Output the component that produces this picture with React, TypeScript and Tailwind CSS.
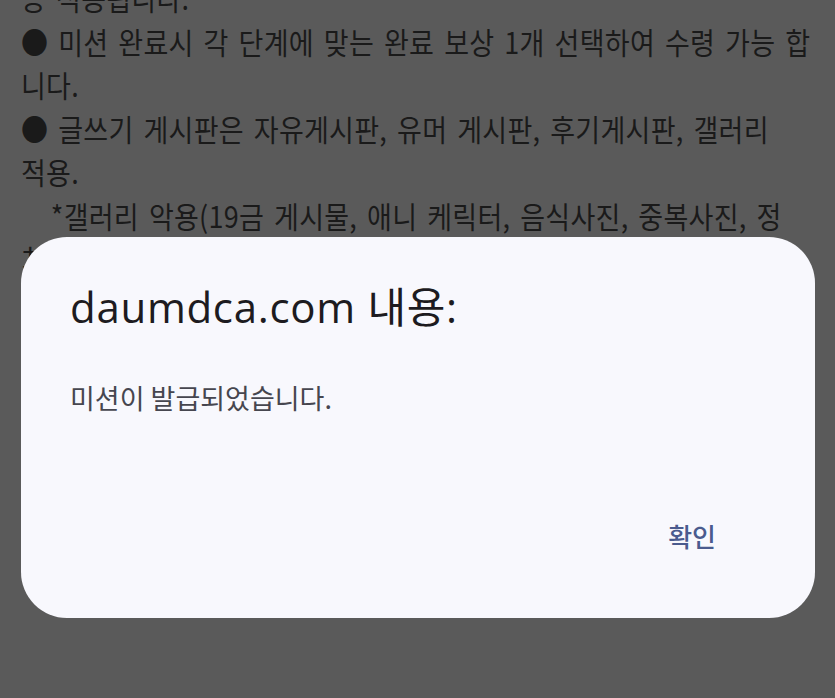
export default function App() {
  const lines = [
    "능 적용됩니다.",
    "● 미션 완료시 각 단계에 맞는 완료 보상 1개 선택하여 수령 가능 합",
    "니다.",
    "● 글쓰기 게시판은 자유게시판, 유머 게시판, 후기게시판, 갤러리",
    "적용.",
    "   *갤러리 악용(19금 게시물, 애니 케릭터, 음식사진, 중복사진, 정",
    "치 관련 사진 등) 시 보상 지급이 제한됩니다.",
  ];

  return (
    <div className="relative h-[698px] w-[835px] overflow-hidden bg-[#5a5a5a]">
      <div className="-mt-[24px] ml-[21px] w-[960px] origin-top-left scale-x-[0.9] whitespace-pre font-['Noto_Sans_CJK_KR',sans-serif] text-[30px] leading-[43.5px] tracking-[0.3px] text-[#1a1a1a] [word-spacing:4px]">
        {lines.map((l, i) => (
          <div key={i}>{l}</div>
        ))}
      </div>

      <div className="absolute left-[21px] top-[237px] flex h-[381px] w-[794px] flex-col rounded-[46px] bg-[#f8f8fd] pl-[49px] pr-[99px]">
        <div className="mt-[44px] font-['Open_Sans','Noto_Sans_CJK_KR',sans-serif] text-[42px] leading-[52px] tracking-[0.7px] text-[#1d1b20]">
          daumdca.com 내용:
        </div>
        <div className="mt-[47px] font-['Noto_Sans_CJK_KR',sans-serif] text-[27px] leading-[36px] text-[#46464f]">
          미션이 발급되었습니다.
        </div>
        <div className="mt-auto mb-[64px] flex justify-end">
          <span className="font-['Noto_Sans_CJK_KR',sans-serif] text-[26px] font-medium leading-[36px] text-[#4a5b8e]">
            확인
          </span>
        </div>
      </div>
    </div>
  );
}
